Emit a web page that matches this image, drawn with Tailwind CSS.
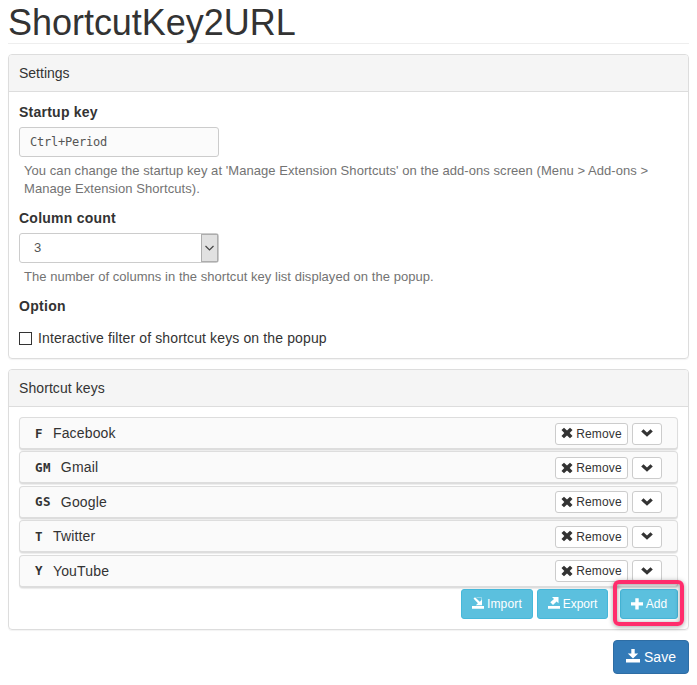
<!DOCTYPE html>
<html lang="en">
<head>
<meta charset="utf-8">
<title>ShortcutKey2URL</title>
<script src="https://cdn.jsdelivr.net/npm/@tailwindcss/browser@4"></script>
</head>
<body class="bg-white font-['Liberation_Sans',Arial,sans-serif] text-[14px] leading-[20px] text-[#333]">
<svg class="hidden">
  <symbol id="remove" viewBox="0 0 12 12"><path d="M3 .8 6 3.400 9 .8 11.500 3 8.700 6l2.800 3L9 11.200 6 8.600 3 11.200.5 9 3.300 6 .5 3z" fill="currentColor"/></symbol>
  <symbol id="chevron" viewBox="0 0 12 8"><path d="M.2 2.500 2.500.2 6 3.500 9.500.2l2.300 2.300L6 7.800z" fill="currentColor"/></symbol>
  <symbol id="import" viewBox="0 0 12 12"><path d="M0 9H12v2.700H0zM1.500 1.500 3 .3 7.800 4.700 10 2.500V8.200H3.800L5.900 6.300z" fill="currentColor"/><path d="M4.500.5H9.500V3" fill="none" stroke="currentColor" stroke-width=".6" opacity=".6"/></symbol>
  <symbol id="export" viewBox="0 0 12 12"><path d="M0 9H12v2.700H0zM4 0H10.500V6.300L8.600 4.600 5 8 2.300 5.300 6 2z" fill="currentColor"/></symbol>
  <symbol id="plus" viewBox="0 0 12 12"><path d="M4.300.2h3.400v4H12v3.400H7.700v4H4.300v-4H0V4.200h4.300z" fill="currentColor"/></symbol>
  <symbol id="save" viewBox="0 0 14 14"><path d="M5.300 0h3.400v4.500h3.500L7 9.500 1.800 4.500h3.500zM0 10h14v3.500H0z" fill="currentColor"/></symbol>
</svg>
<main class="px-2 w-[697px]">
  <h1 class="h-[44px] border-b border-[#eee] text-[36px] leading-[45px] whitespace-nowrap tracking-[-0.03px]">ShortcutKey2URL</h1>

  <section class="mt-[10px] h-[305px] rounded-[4px] border border-[#ddd] shadow-[0_1px_1px_rgba(0,0,0,0.05)]">
    <h2 class="h-[37px] rounded-t-[3px] border-b border-[#ddd] bg-[#f5f5f5] px-[10px] pt-[8px]">Settings</h2>
    <div class="px-[10px] pt-[10px]">
      <h3 class="font-bold tracking-[0.24px]">Startup key</h3>
      <div class="mt-[5px] flex h-[30px] w-[200px] items-center rounded-[3px] border border-[#ccc] bg-[#fbfbfb] px-[10px] font-['DejaVu_Sans_Mono',monospace] text-[12px] tracking-[-0.22px] text-[#555]">Ctrl+Period</div>
      <p class="mt-[5px] pl-[5px] text-[13px] leading-[18px] tracking-[0.06px] text-[#737373]">You can change the startup key at 'Manage Extension Shortcuts' on the add-ons screen (Menu &gt; Add-ons &gt;<br>Manage Extension Shortcuts).</p>
      <h3 class="mt-[10px] font-bold tracking-[0.24px]">Column count</h3>
      <div class="mt-[5px] flex h-[30px] w-[200px] rounded-[3px] border border-[#ccc] text-[#555]">
        <span class="flex-1 pl-[14px] pt-[4px] text-[13px]">3</span>
        <span class="flex w-[17px] items-center justify-center border border-[#adadad] bg-[#e1e1e1]"><svg class="h-[6px] w-[9px] shrink-0" viewBox="0 0 9 6" fill="none" stroke="#444" stroke-width="1.2"><path d="M.5 1 4.500 5 8.500 1"/></svg></span>
      </div>
      <p class="mt-[5px] pl-[5px] text-[13px] leading-[18px] tracking-[0.04px] text-[#737373]">The number of columns in the shortcut key list displayed on the popup.</p>
      <h3 class="mt-[10px] font-bold tracking-[0.3px]">Option</h3>
      <label class="mt-[12px] flex items-center gap-[6px] tracking-[0.13px]"><span class="size-[13px] border border-[#333] bg-white"></span>Interactive filter of shortcut keys on the popup</label>
    </div>
  </section>

  <section class="mt-[10px] h-[261px] rounded-[4px] border border-[#ddd] shadow-[0_1px_1px_rgba(0,0,0,0.05)]">
    <h2 class="h-[37px] rounded-t-[3px] border-b border-[#ddd] bg-[#f5f5f5] px-[10px] pt-[8px] tracking-[0.08px]">Shortcut keys</h2>
    <div class="px-[10px] pt-[10px]">
      <ul id="keys" class="h-[172px]"></ul>
      <div class="flex justify-end gap-1 text-[12px] text-white">
        <button class="flex h-[30px] w-[72px] items-center justify-center gap-[3px] rounded-[3px] border border-[#46b8da] bg-[#5bc0de] tracking-[0.2px]"><svg class="size-[12px] -mt-[2px]"><use href="#import"/></svg>Import</button>
        <button class="flex h-[30px] w-[71px] items-center justify-center gap-[3px] rounded-[3px] border border-[#46b8da] bg-[#5bc0de]"><svg class="size-[12px] -mt-[2px]"><use href="#export"/></svg>Export</button>
        <div class="relative ml-2 h-[30px] w-[58px]">
          <button class="flex h-[30px] w-[58px] items-center justify-center gap-[3px] rounded-[3px] border border-[#46b8da] bg-[#5bc0de]"><svg class="size-[12px]"><use href="#plus"/></svg>Add</button>
          <span class="absolute -left-[7px] -top-[9px] h-[46px] w-[71px] rounded-[6px] border-4 border-[#ff2d6c] shadow-[0_1px_5px_rgba(0,0,0,0.35),inset_0_1px_5px_rgba(0,0,0,0.4)]"></span>
        </div>
      </div>
    </div>
  </section>
  <div class="mt-[10px] flex justify-end">
    <button class="flex h-[34px] w-[76px] items-center justify-center gap-[4px] rounded-[4px] border border-[#2e6da4] bg-[#337ab7] text-white"><svg class="size-[14px] -mt-[2px]"><use href="#save"/></svg>Save</button>
  </div>
</main>
<script>
const entries = [['F', 'Facebook'], ['GM', 'Gmail'], ['GS', 'Google'], ['T', 'Twitter'], ['Y', 'YouTube']];
document.getElementById('keys').innerHTML = entries.map(([key, name]) => `
  <li class="mb-[1.45px] flex h-[33px] items-center rounded-[4px] border border-[#ddd] border-b-2 bg-[#fafafa] pl-[15px] pr-[15px] shadow-[0_1px_1px_rgba(0,0,0,0.08)]">
    <b class="mt-[1px] mr-[10px] font-['DejaVu_Sans_Mono',monospace] text-[12.500px] tracking-[0.4px]">${key}</b>
    <span class="flex-1 tracking-[0.16px]">${name}</span>
    <button class="mr-1 flex h-[22px] w-[73px] mt-[1.2px] items-center justify-center gap-[3px] rounded-[3px] border border-[#ccc] bg-white text-[12px] tracking-[0.15px]"><svg class="size-[12px] -mt-[1px]"><use href="#remove"/></svg>Remove</button>
    <button class="flex h-[22px] w-[30px] mt-[1.2px] items-center justify-center rounded-[3px] border border-[#ccc] bg-white"><svg class="h-[8px] w-[12px] -mt-[1px]"><use href="#chevron"/></svg></button>
  </li>`).join('');
</script>
</body>
</html>
